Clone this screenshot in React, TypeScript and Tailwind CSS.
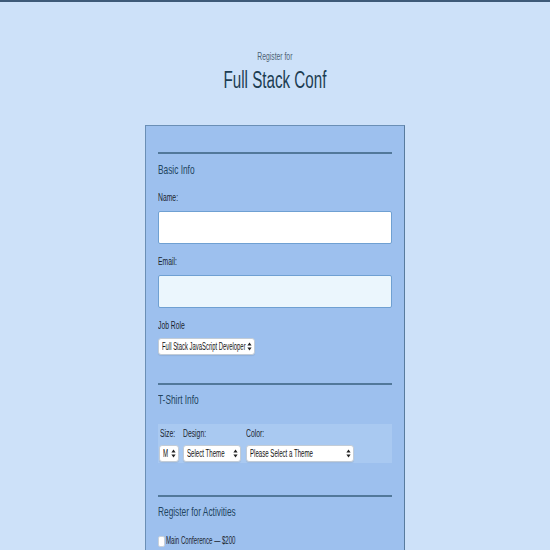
import React from "react";

const SCALES = {
  a: "scale-x-[0.68]",
  b: "scale-x-[0.64]",
  c: "scale-x-[0.61]",
  d: "scale-x-[0.59]",
} as const;

function T({ children, s = "a" }: { children: React.ReactNode; s?: keyof typeof SCALES }) {
  return (
    <span className={"inline-block origin-left whitespace-nowrap " + SCALES[s]}>{children}</span>
  );
}

function Arrows() {
  return (
    <svg width="5" height="9" viewBox="0 0 5 9" className="absolute right-[2px] top-[3px]">
      <path d="M2.5 0.5 L4.6 3.6 L0.4 3.6 Z" fill="#222" />
      <path d="M2.5 8.5 L4.6 5.4 L0.4 5.4 Z" fill="#222" />
    </svg>
  );
}

function FakeSelect({ label, w, s = "c" }: { label: string; w: string; s?: keyof typeof SCALES }) {
  return (
    <div
      className={
        "relative h-[17px] rounded-[3px] border border-[#c3ccd6] bg-white pl-[3px] shadow-[0_1px_1px_rgba(0,0,0,0.08)] " +
        w
      }
    >
      <div className="text-[10px] leading-[15px] text-[#111]">
        <T s={s}>{label}</T>
      </div>
      <Arrows />
    </div>
  );
}

export default function App() {
  return (
    <div
      className="min-h-[550px] border-t-2 border-[#3e5a78] bg-[#cde1f9]"
      style={{ fontFamily: '"Liberation Sans", Arial, sans-serif' }}
    >
      <header className="flex flex-col items-center pt-[48px]">
        <div className="text-[10px] leading-[14px] text-[#4d6175]">
          <span className="inline-block scale-x-[0.68] whitespace-nowrap">Register for</span>
        </div>
        <h1 className="mt-[3px] text-[23px] leading-[26px] text-[#1c3d53]">
          <span className="inline-block scale-x-[0.66] whitespace-nowrap">Full Stack Conf</span>
        </h1>
      </header>

      <main className="mx-auto mt-[32px] w-[260px] border border-[#6a8fb6] border-r-[#587b9e] bg-[#9dc0ee] px-[12px] pt-[26px]">
        <div className="h-[2px] bg-[#52789a]" />
        <div className="mt-[8px] text-[13px] leading-[16px] text-[#22455f]">
          <T s="b">Basic Info</T>
        </div>

        <div className="mt-[14px] text-[10px] leading-[12px] text-[#1b2530]">
          <T>Name:</T>
        </div>
        <div className="mt-[7px] h-[33px] rounded-[2px] border border-[#6fa0d2] bg-white" />

        <div className="mt-[12px] text-[10px] leading-[12px] text-[#1b2530]">
          <T>Email:</T>
        </div>
        <div className="mt-[7px] h-[33px] rounded-[2px] border border-[#6fa0d2] bg-[#ebf6fd]" />

        <div className="mt-[12px] text-[10px] leading-[12px] text-[#1b2530]">
          <T>Job Role</T>
        </div>
        <div className="mt-[6px]">
          <FakeSelect label="Full Stack JavaScript Developer" w="w-[97px]" s="d" />
        </div>

        <div className="mt-[28px] h-[2px] bg-[#52789a]" />
        <div className="mt-[7px] text-[13px] leading-[16px] text-[#22455f]">
          <T s="b">T-Shirt Info</T>
        </div>

        <div className="mt-[16px] flex h-[39px] gap-[4px] bg-[#a9c9f1] pl-[1px] pt-[4px]">
          <div className="flex w-[20px] shrink-0 flex-col">
            <div className="pl-[1px] text-[10px] leading-[12px] text-[#1b2530]">
              <T>Size:</T>
            </div>
            <div className="mt-[5px]">
              <FakeSelect label="M" w="w-[20px]" />
            </div>
          </div>
          <div className="flex w-[58px] shrink-0 flex-col">
            <div className="text-[10px] leading-[12px] text-[#1b2530]">
              <T>Design:</T>
            </div>
            <div className="mt-[5px]">
              <FakeSelect label="Select Theme" w="w-[58px]" />
            </div>
          </div>
          <div className="ml-[1px] flex w-[108px] shrink-0 flex-col">
            <div className="text-[10px] leading-[12px] text-[#1b2530]">
              <T>Color:</T>
            </div>
            <div className="mt-[5px]">
              <FakeSelect label="Please Select a Theme" w="w-[108px]" />
            </div>
          </div>
        </div>

        <div className="mt-[32px] h-[2px] bg-[#52789a]" />
        <div className="mt-[7px] text-[13px] leading-[16px] text-[#22455f]">
          <T s="b">Register for Activities</T>
        </div>

        <label className="mt-[15px] flex items-center gap-[1px] pb-[20px]">
          <span className="h-[11px] w-[7px] shrink-0 rounded-[2px] border border-[#c9d1da] bg-white" />
          <span className="text-[10px] leading-[12px] text-[#1b2530]">
            <T s="c">Main Conference — $200</T>
          </span>
        </label>
      </main>
    </div>
  );
}
